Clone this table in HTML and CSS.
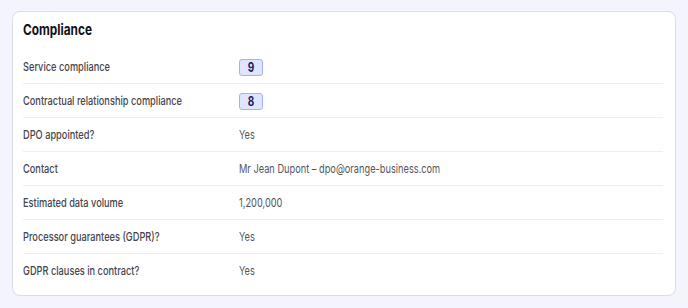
FILE: index.html
```html
<!DOCTYPE html>
<html>
<head>
<meta charset="utf-8">
<link rel="stylesheet" href="styles.css">
</head>
<body>
<section class="card">
  <h2 class="title"><span class="squeeze">Compliance</span></h2>
  <div class="rows">
    <div class="row"><span class="label"><span class="squeeze">Service compliance</span></span><span class="value"><span class="badge"><span class="digit">9</span></span></span></div>
    <div class="row"><span class="label"><span class="squeeze">Contractual relationship compliance</span></span><span class="value"><span class="badge"><span class="digit">8</span></span></span></div>
    <div class="row"><span class="label"><span class="squeeze">DPO appointed?</span></span><span class="value"><span class="squeeze">Yes</span></span></div>
    <div class="row"><span class="label"><span class="squeeze">Contact</span></span><span class="value"><span class="squeeze">Mr Jean Dupont – dpo@orange-business.com</span></span></div>
    <div class="row"><span class="label"><span class="squeeze">Estimated data volume</span></span><span class="value"><span class="squeeze">1,200,000</span></span></div>
    <div class="row"><span class="label"><span class="squeeze">Processor guarantees (GDPR)?</span></span><span class="value"><span class="squeeze">Yes</span></span></div>
    <div class="row"><span class="label"><span class="squeeze">GDPR clauses in contract?</span></span><span class="value"><span class="squeeze">Yes</span></span></div>
  </div>
</section>
</body>
</html>
```
FILE: styles.css
```css
html, body {
  margin: 0;
  background: #f4f4fc;
}
body {
  padding: 11px 12px;
  font-family: Inter, "Noto Sans", sans-serif;
}
.card {
  background: #fff;
  border: 1px solid #dcdcec;
  border-radius: 8px;
  padding: 8px 12px 8px 10px;
}
.squeeze {
  display: inline-block;
  white-space: nowrap;
  transform: scaleX(0.77);
  transform-origin: 0 50%;
}
.title {
  margin: 0 0 10px;
  font-size: 15px;
  line-height: 20px;
  font-weight: 700;
  color: #111118;
}
.title .squeeze {
  transform: scaleX(0.79);
}
.row {
  display: grid;
  grid-template-columns: 216px 1fr;
  align-items: center;
  height: 33px;
  border-bottom: 1px solid #ededf2;
}
.row:last-child {
  border-bottom: none;
}
.label {
  font-size: 12px;
  font-weight: 500;
  color: #45454d;
}
.value {
  font-size: 12px;
  color: #55555c;
  display: flex;
  align-items: center;
}
.badge {
  display: inline-flex;
  align-items: center;
  justify-content: center;
  box-sizing: border-box;
  width: 24px;
  height: 17px;
  margin-top: 2px;
  border: 1px solid #a3b2f6;
  background: #dfe5ff;
  border-radius: 3px;
  color: #1e1b5b;
  font-weight: 700;
  font-size: 12.5px;
}
.digit {
  display: inline-block;
  transform: scaleX(0.8);
}
```
